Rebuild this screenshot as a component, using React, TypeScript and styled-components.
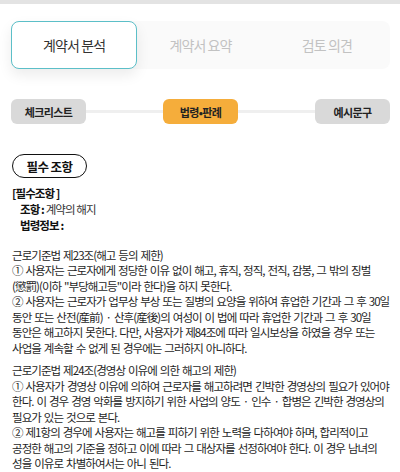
import { styled, createGlobalStyle } from "styled-components";

const GlobalStyle = createGlobalStyle`
  body {
    margin: 0;
    background: #ffffff;
    font-family: "Noto Sans CJK KR", "Noto Sans", sans-serif;
    color: #222;
  }
`;

const TopBar = styled.div`
  height: 4px;
  background-color: #e3e3e3;
`;

const Container = styled.div`
  padding: 17px 10px 0 11px;
`;

const Tabs = styled.div`
  display: grid;
  grid-template-columns: repeat(3, 1fr);
  height: 48px;
  background-color: #fafafa;
  border-radius: 8px;
`;

const Tab = styled.div<{ $active?: boolean }>`
  display: flex;
  align-items: center;
  justify-content: center;
  font-size: 14px;
  letter-spacing: -0.9px;
  color: ${(props) => (props.$active ? "#333" : "#c2c2c2")};
  background-color: ${(props) => (props.$active ? "#fff" : "transparent")};
  border: 1px solid ${(props) => (props.$active ? "#5cbfc8" : "transparent")};
  border-radius: 8px;
  box-shadow: ${(props) =>
    props.$active ? "0 6px 14px rgba(0, 0, 0, 0.08)" : "none"};
`;

const Steps = styled.div`
  display: flex;
  align-items: center;
  margin-top: 30px;
`;

const Step = styled.div<{ $current?: boolean }>`
  width: 75px;
  height: 25px;
  flex: none;
  display: flex;
  align-items: center;
  justify-content: center;
  border-radius: 6px;
  font-size: 11px;
  font-weight: 700;
  letter-spacing: -0.6px;
  color: #222;
  background-color: ${(props) => (props.$current ? "#f5ad3b" : "#d9d9d9")};
`;

const Connector = styled.div`
  flex: 1;
  height: 3px;
  background-color: #efefef;
`;

const SectionButton = styled.div`
  margin-top: 30px;
  margin-left: 1px;
  width: 75px;
  height: 24px;
  box-sizing: border-box;
  border: 1.3px solid #111;
  border-radius: 12px;
  display: flex;
  align-items: center;
  justify-content: center;
  font-size: 12.5px;
  font-weight: 700;
  letter-spacing: -0.6px;
  color: #111;
`;

const Info = styled.div`
  margin-top: 7px;
  font-size: 11.5px;
  letter-spacing: -0.9px;
  line-height: 16.2px;
  font-weight: 700;
  color: #111;
`;

const InfoRow = styled.div<{ $indent?: boolean }>`
  padding-left: ${(props) => (props.$indent ? "9px" : "1px")};
`;

const Value = styled.span`
  font-weight: 400;
  color: #333;
`;

const Body = styled.div`
  margin-top: 14px;
  padding-left: 1px;
  display: flex;
  flex-direction: column;
  gap: 7px;
  font-size: 11.5px;
  letter-spacing: -0.95px;
  word-spacing: 1.3px;
  line-height: 15.5px;
  color: #1e1e1e;
`;

const Paragraph = styled.div``;

const Line = styled.div`
  white-space: nowrap;
`;

const articles = [
  [
    "근로기준법 제23조(해고 등의 제한)",
    "① 사용자는 근로자에게 정당한 이유 없이 해고, 휴직, 정직, 전직, 감봉, 그 밖의 징벌",
    '(懲罰)(이하 "부당해고등"이라 한다)을 하지 못한다.',
    "② 사용자는 근로자가 업무상 부상 또는 질병의 요양을 위하여 휴업한 기간과 그 후 30일",
    "동안 또는 산전(産前) · 산후(産後)의 여성이 이 법에 따라 휴업한 기간과 그 후 30일",
    "동안은 해고하지 못한다. 다만, 사용자가 제84조에 따라 일시보상을 하였을 경우 또는",
    "사업을 계속할 수 없게 된 경우에는 그러하지 아니하다.",
  ],
  [
    "근로기준법 제24조(경영상 이유에 의한 해고의 제한)",
    "① 사용자가 경영상 이유에 의하여 근로자를 해고하려면 긴박한 경영상의 필요가 있어야",
    "한다. 이 경우 경영 악화를 방지하기 위한 사업의 양도 · 인수 · 합병은 긴박한 경영상의",
    "필요가 있는 것으로 본다.",
    "② 제1항의 경우에 사용자는 해고를 피하기 위한 노력을 다하여야 하며, 합리적이고",
    "공정한 해고의 기준을 정하고 이에 따라 그 대상자를 선정하여야 한다. 이 경우 남녀의",
    "성을 이유로 차별하여서는 아니 된다.",
  ],
];

function App() {
  return (
    <>
      <GlobalStyle />
      <TopBar />
      <Container>
        <Tabs>
          <Tab $active>계약서 분석</Tab>
          <Tab>계약서 요약</Tab>
          <Tab>검토 의견</Tab>
        </Tabs>
        <Steps>
          <Step>체크리스트</Step>
          <Connector />
          <Step $current>법령•판례</Step>
          <Connector />
          <Step>예시문구</Step>
        </Steps>
        <SectionButton>필수 조항</SectionButton>
        <Info>
          <InfoRow>[필수조항 ]</InfoRow>
          <InfoRow $indent>
            조항 : <Value>계약의 해지</Value>
          </InfoRow>
          <InfoRow $indent>법령정보 :</InfoRow>
        </Info>
        <Body>
          {articles.map((lines, i) => (
            <Paragraph key={i}>
              {lines.map((line, j) => (
                <Line key={j}>{line}</Line>
              ))}
            </Paragraph>
          ))}
        </Body>
      </Container>
    </>
  );
}

export default App;
